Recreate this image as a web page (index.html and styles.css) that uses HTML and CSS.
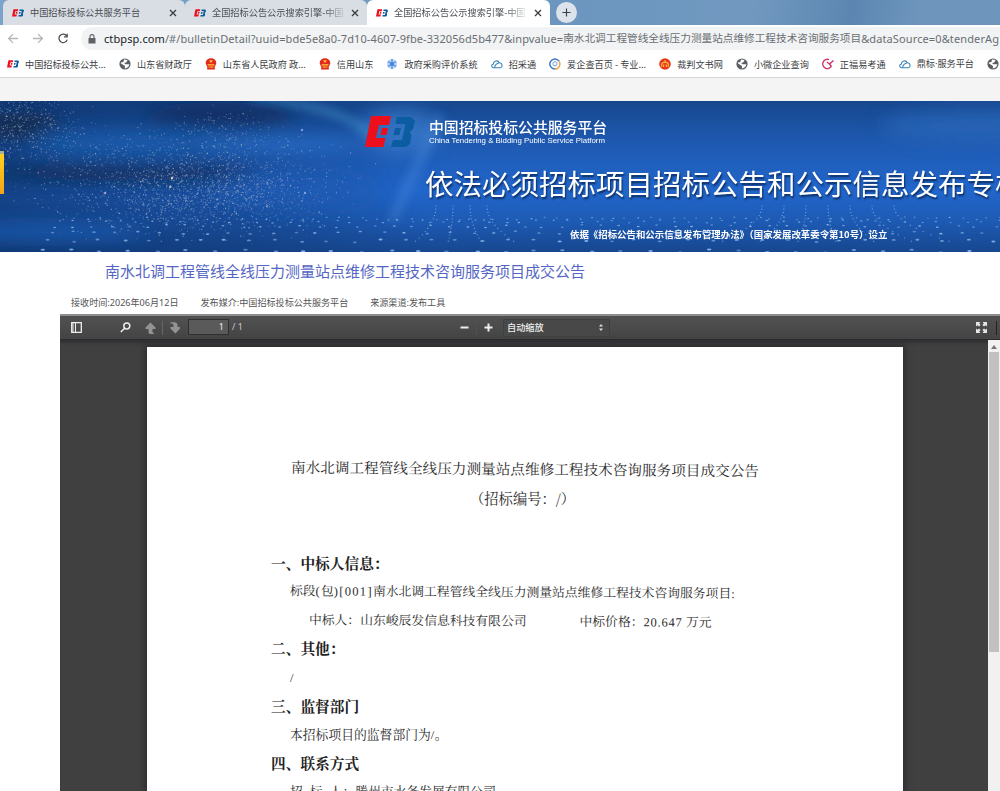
FILE: index.html
```
<!DOCTYPE html>
<html lang="zh-CN">
<head>
    <meta charset="UTF-8">
    <title>全国招标公告公示搜索引擎</title>
    <link rel="stylesheet" href="styles.css">
</head>
<body>
    <!-- shared icons -->
    <svg class="defs" width="0" height="0">
        <symbol id="eb" viewBox="0 0 50 32">
            <path fill="#ee0f1c" d="M6 0H26L24 9H14L11 22H20.500L18.500 31H0Z"/>
            <path fill="#ee0f1c" d="M17 12H23L21.500 19H15.500Z"/>
            <path fill="#0b5ca0" d="M32 1H46L50 5L48 13L44.500 16L46.500 19L45 28L41 31H26L28 24H37L40.500 8H30.500Z"/>
            <path fill="#0b5ca0" d="M30 12H36L34.500 19H28.500Z"/>
        </symbol>
        <symbol id="globe" viewBox="0 0 12 12">
            <circle cx="6" cy="6" r="5.6" fill="#5a5f64"/>
            <path fill="#fff" d="M5 1.6L8.6 2L7.2 4.6L5 5L6.6 6.2L10.4 6.3L9.4 8.8L7.6 10L5.8 10.4L6 8L2 5.4L1.8 4.4L4.4 4Z"/>
        </symbol>
        <symbol id="emblem" viewBox="0 0 12 12">
            <path fill="#e0281c" d="M6 0.3C9.4 0.3 11.4 2.6 11.3 5.6L9.6 9.2L10 11.6H2L2.4 9.2L0.7 5.6C0.6 2.6 2.6 0.3 6 0.3Z"/>
            <path fill="#ffc83d" d="M6 1.4L6.6 2.6H8L7 3.5L7.4 4.8L6 4L4.6 4.8L5 3.5L4 2.6H5.4ZM2.6 6.2H9.4V7.4H2.6ZM3.6 8.6H8.4V9.6H3.6Z"/>
        </symbol>
        <symbol id="cloud" viewBox="0 0 12 12">
            <path fill="none" stroke="#3c86b8" stroke-width="1.1" d="M2.8 9.8C0 9.6 0 6.4 2.4 6C2.6 2.6 7 1.8 8.2 4.8C11 4.6 12.4 8.8 9.4 9.8ZM3.6 9.4C4 7.4 6 5.4 8.2 4.8"/>
        </symbol>
    </svg>

    <div class="tabs">
        <div class="tab">
            <svg class="eb"><use href="#eb"/></svg>
            <span class="tab-title">中国招标投标公共服务平台</span>
            <svg class="close" viewBox="0 0 8 8"><path d="M1 1L7 7M7 1L1 7"/></svg>
        </div>
        <div class="tab">
            <svg class="eb"><use href="#eb"/></svg>
            <span class="tab-title fade">全国招标公告公示搜索引擎-中国</span>
            <svg class="close" viewBox="0 0 8 8"><path d="M1 1L7 7M7 1L1 7"/></svg>
        </div>
        <div class="tab active">
            <svg class="eb"><use href="#eb"/></svg>
            <span class="tab-title fade">全国招标公告公示搜索引擎-中国</span>
            <svg class="close" viewBox="0 0 8 8"><path d="M1 1L7 7M7 1L1 7"/></svg>
        </div>
        <div class="new-tab"><svg viewBox="0 0 10 10"><path d="M5 0.5V9.5M0.5 5H9.5"/></svg></div>
    </div>

    <div class="address-bar">
        <svg class="nav off" viewBox="0 0 12 12"><path d="M11.5 6H1.2M6 1.2L1.2 6L6 10.8"/></svg>
        <svg class="nav off" viewBox="0 0 12 12"><path d="M0.5 6H10.8M6 1.2L10.8 6L6 10.8"/></svg>
        <svg class="nav" viewBox="0 0 12 12"><path d="M10 3.2A4.6 4.6 0 1 0 10.6 7.2M10.6 0.8V4.2H7"/></svg>
        <div class="url">
            <svg class="lock" viewBox="0 0 8 10"><path fill="#5f6368" d="M0.5 4H7.5V9.5H0.5Z"/><path fill="none" stroke="#5f6368" stroke-width="1.1" d="M2 4V2.6A2 2 0 0 1 6 2.6V4"/></svg>
            <span class="latin"><b>ctbpsp.com</b>/#/bulletinDetail?uuid=bde5e8a0-7d10-4607-9fbe-332056d5b477&amp;inpvalue=</span><span class="cjk">南水北调工程管线全线压力测量站点维修工程技术咨询服务项目</span><span class="query">&amp;dataSource=0&amp;tenderAg</span>
        </div>
    </div>

    <div class="bookmarks">
        <div class="bookmark"><svg class="eb"><use href="#eb"/></svg><span>中国招标投标公共...</span></div>
        <div class="bookmark"><svg><use href="#globe"/></svg><span>山东省财政厅</span></div>
        <div class="bookmark"><svg><use href="#emblem"/></svg><span>山东省人民政府 政...</span></div>
        <div class="bookmark"><svg><use href="#emblem"/></svg><span>信用山东</span></div>
        <div class="bookmark"><svg viewBox="0 0 12 12"><path fill="#a9d0f5" d="M6 0.5L10.8 3.2V8.8L6 11.5L1.2 8.8V3.2Z"/><path fill="none" stroke="#4a86dc" d="M6 1V11M2 3.5L10 8.5M10 3.5L2 8.5"/><circle cx="6" cy="6" r="2" fill="#4a7fe0"/></svg><span>政府采购评价系统</span></div>
        <div class="bookmark"><svg><use href="#cloud"/></svg><span>招采通</span></div>
        <div class="bookmark"><svg viewBox="0 0 12 12"><path fill="none" stroke="#3f78c8" stroke-width="1.5" d="M10 3.2A5 5 0 1 0 6 11"/><path fill="none" stroke="#f0a54a" stroke-width="1.5" d="M10 3.2A5 5 0 0 1 6 11"/><circle cx="6" cy="5.8" r="2.1" fill="none" stroke="#6a9ae0"/></svg><span>爱企查百页 - 专业...</span></div>
        <div class="bookmark"><svg viewBox="0 0 12 12"><circle cx="6" cy="6" r="5.8" fill="#e5391b"/><path fill="none" stroke="#ffb23e" stroke-width="1.2" d="M6 2V5M3 9C1.8 6 3 4 6 4.4C9 4 10.2 6 9 9M4.6 9V6.6M7.4 9V6.6"/></svg><span>裁判文书网</span></div>
        <div class="bookmark"><svg><use href="#globe"/></svg><span>小微企业查询</span></div>
        <div class="bookmark"><svg viewBox="0 0 12 12"><path fill="none" stroke="#d03468" stroke-width="1.4" d="M7 1.6A4.6 4.6 0 1 0 9.4 8.2M5 4L7.5 6L11.5 2.5M7.5 6L9.5 8.5"/></svg><span>正福易考通</span></div>
        <div class="bookmark"><svg><use href="#cloud"/></svg><span class="dotted">鼎标·服务平台</span></div>
        <div class="bookmark"><svg><use href="#globe"/></svg></div>
    </div>

    <div class="banner">
        <svg class="banner-bg" id="bannerBg" width="1000" height="151" viewBox="0 0 1000 151">
            <defs>
                <linearGradient id="base" x1="0" y1="0" x2="0" y2="1">
                    <stop offset="0" stop-color="#17488e"/>
                    <stop offset="0.3" stop-color="#1f5bb4"/>
                    <stop offset="0.6" stop-color="#2166cb"/>
                    <stop offset="0.8" stop-color="#1d5ab3"/>
                    <stop offset="1" stop-color="#17478f"/>
                </linearGradient>
                <linearGradient id="dark" x1="0" y1="0" x2="1" y2="0">
                    <stop offset="0" stop-color="#0d2e60" stop-opacity="0.6"/>
                    <stop offset="0.6" stop-color="#0f3570" stop-opacity="0.4"/>
                    <stop offset="1" stop-color="#0f3570" stop-opacity="0"/>
                </linearGradient>
                <filter id="soft" x="-30%" y="-80%" width="160%" height="260%"><feGaussianBlur stdDeviation="9"/></filter>
                <filter id="softer" x="-30%" y="-80%" width="160%" height="260%"><feGaussianBlur stdDeviation="5"/></filter>
            </defs>
            <rect width="1000" height="151" fill="url(#base)"/>
            <rect width="420" height="151" fill="url(#dark)"/>
            <g filter="url(#soft)">
                <ellipse cx="130" cy="42" rx="100" ry="13" fill="#1c5eb0" opacity="0.8"/>
                <ellipse cx="220" cy="14" rx="75" ry="13" fill="#0d2c5e" opacity="0.8"/>
                <ellipse cx="20" cy="25" rx="40" ry="9" fill="#16233c" opacity="0.9"/>
                <ellipse cx="120" cy="72" rx="140" ry="8" fill="#10264a" opacity="0.8"/>
                <ellipse cx="280" cy="43" rx="80" ry="7" fill="#2a78d6" opacity="0.8"/>
                <ellipse cx="300" cy="90" rx="80" ry="20" fill="#1e5ab2" opacity="0.6"/>
                <ellipse cx="40" cy="131" rx="110" ry="6" fill="#1d62bd"/>
                <ellipse cx="400" cy="30" rx="40" ry="22" fill="#3f86d4" opacity="0.6"/>
                <ellipse cx="980" cy="25" rx="100" ry="16" fill="#2d6cc0" opacity="0.6"/>
            </g>
            <g filter="url(#softer)" fill="none">
                <path d="M250 -4C300 2 345 10 372 34" stroke="#4aa3d8" stroke-width="6" opacity="0.55"/>
                <path d="M440 15L392 120" stroke="#5fa0ea" stroke-width="9" opacity="0.3"/>
            </g>
        </svg>
        <div class="side-tag"></div>
        <div class="banner-text">
            <div class="brand">
                <svg class="brand-logo"><use href="#eb"/></svg>
                <div>
                    <div class="brand-cn">中国招标投标公共服务平台</div>
                    <div class="brand-en">China Tendering &amp; Bidding Public Service Platform</div>
                </div>
            </div>
            <div class="slogan">依法必须招标项目招标公告和公示信息发布专栏</div>
            <div class="basis">依据《招标公告和公示信息发布管理办法》（国家发展改革委令第10号）设立</div>
        </div>
    </div>

    <div class="content">
        <h1>南水北调工程管线全线压力测量站点维修工程技术咨询服务项目成交公告</h1>
        <div class="meta">
            <span>接收时间:2026年06月12日</span>
            <span>发布媒介:中国招标投标公共服务平台</span>
            <span>来源渠道:发布工具</span>
        </div>

        <div class="viewer">
            <div class="toolbar">
                <svg class="sidebar-icon" viewBox="0 0 11 11"><path fill="none" stroke="#eee" stroke-width="1.3" d="M0.7 0.7H10.3V10.3H0.7Z"/><path fill="#eee" d="M1.500 1H2.500V10H1.500ZM4 1H5V10H4Z"/></svg>
                <svg class="find-icon" viewBox="0 0 11 11"><path fill="none" stroke="#eee" stroke-width="1.5" d="M6.8 1A3 3 0 1 1 6.8 7A3 3 0 1 1 6.8 1M4.6 6.2L0.8 10"/></svg>
                <svg class="arrow" viewBox="0 0 11 12"><path fill="#939393" d="M5.5 0.5L10.5 5.5V7H7.5V9.5C7.5 10.5 8 11 9 11V12H5C4 12 3.5 11 3.5 10V7H0.5V5.5Z"/></svg>
                <i class="split"></i>
                <svg class="arrow" viewBox="0 0 11 12"><path fill="#939393" d="M6.5 11.5L1.5 6.5V5H4.5V3.5C4.5 2 3.5 1.5 1.5 1.5V0.3H5C7.5 0.3 8.5 1.5 8.5 3V5H11V6.5Z"/></svg>
                <span class="page-input">1</span>
                <span class="page-total">/ 1</span>
                <svg class="minus" viewBox="0 0 9 9"><path d="M0.5 4.5H8.5"/></svg>
                <i class="split faint"></i>
                <svg class="plus" viewBox="0 0 9 9"><path d="M0.5 4.5H8.5M4.5 0.5V8.5"/></svg>
                <span class="zoom">自动缩放<svg viewBox="0 0 4 7"><path fill="#ddd" d="M2 0L4 2.4H0ZM2 7L4 4.6H0Z"/></svg></span>
                <svg class="full" viewBox="0 0 11 11"><path fill="#e6e6e6" d="M0 0H4.4L3.2 1.4L4.6 3L3 4.6L1.4 3.2L0 4.4ZM11 0V4.4L9.6 3.2L8 4.6L6.4 3L7.8 1.4L6.6 0ZM0 11V6.6L1.4 7.8L3 6.4L4.6 8L3.2 9.6L4.4 11ZM11 11H6.6L7.8 9.6L6.4 8L8 6.4L9.6 7.8L11 6.6Z"/></svg>
                <i class="split dark"></i>
            </div>
            <div class="pages">
                <div class="page">
                    <p class="doc-title">南水北调工程管线全线压力测量站点维修工程技术咨询服务项目成交公告</p>
                    <p class="doc-code">（招标编号：/）</p>
                    <h2>一、中标人信息：</h2>
                    <p class="tilt">标段<kbd>(</kbd>包<kbd>)[001]</kbd>南水北调工程管线全线压力测量站点维修工程技术咨询服务项目<kbd>:</kbd></p>
                    <p class="winner tilt"><span>中标人：山东峻辰发信息科技有限公司</span><span>中标价格：<kbd>20.647</kbd> 万元</span></p>
                    <h2>二、其他：</h2>
                    <p><kbd>/</kbd></p>
                    <h2>三、监督部门</h2>
                    <p>本招标项目的监督部门为<kbd>/</kbd>。</p>
                    <h2>四、联系方式</h2>
                    <p class="contact"><span>招</span><span>标</span><span>人：</span>滕州市水务发展有限公司</p>
                </div>
                <div class="scrollbar">
                    <svg viewBox="0 0 6 4"><path fill="#777" d="M3 0L6 4H0Z"/></svg>
                    <div class="thumb"></div>
                </div>
            </div>
        </div>
    </div>

    <script>
        // star dust on the left of the banner and rows of light dots along its floor
        const bg = document.getElementById('bannerBg');
        let seed = 7;

        function rand() {
            seed = (seed * 16807) % 2147483647;
            return seed / 2147483647;
        }

        function dot(x, y, rx, ry, color, opacity) {
            const el = document.createElementNS('http://www.w3.org/2000/svg', 'ellipse');
            el.setAttribute('cx', x);
            el.setAttribute('cy', y);
            el.setAttribute('rx', rx);
            el.setAttribute('ry', ry);
            el.setAttribute('fill', color);
            el.setAttribute('opacity', opacity);
            bg.appendChild(el);
        }

        function cloud(count, cx, cy, w, h) {
            const colors = ['#b9c8e6', '#8ea6cf', '#d6c9bd', '#7f9fe0'];
            for (let i = 0; i < count; i++) {
                const x = cx + (rand() + rand() + rand() - 1.5) * w;
                const y = cy + (rand() + rand() + rand() - 1.5) * h;
                const r = 0.3 + rand() * 0.45;
                dot(x, y, r, r, colors[Math.floor(rand() * 4)], 0.25 + rand() * 0.45);
            }
        }

        cloud(800, 10, 25, 70, 32);
        cloud(1700, 180, 72, 140, 42);
        cloud(1300, 210, 98, 115, 34);
        cloud(160, 225, 28, 50, 20);

        // a few brighter stars
        dot(172, 77, 1.1, 1.3, '#ffd9b0', 0.9);
        dot(170, 86, 1.1, 1.1, '#f3d3e0', 0.8);
        dot(105, 92, 1.4, 1.2, '#d9b6d8', 0.7);
        dot(305, 92, 1.2, 1, '#c9d3f5', 0.7);
        dot(302, 29, 1.2, 1, '#c9d3f5', 0.7);

        for (let row = 0; row < 6; row++) {
            const y = 116 + row * row * 0.9 + row * 2;
            const step = 12 + row * 3.4;
            for (let x = 60 - row * 4; x < 1000; x += step) {
                dot(x + rand() * 5, y + rand() * 3, 1 + row * 0.25, 0.6 + row * 0.08, '#a5c8f5', 0.4 + rand() * 0.4);
            }
        }

        // curved trails running up to the horizon
        for (let i = 0; i < 11; i++) {
            const x = i < 4 ? 436 + i * 17 : 762 + (i - 4) * 22;
            for (let k = 0; k < 12; k++) {
                dot(x + (i < 4 ? i - 1.3 : i - 6.5) * k * k * 0.13, 105 + k * 3.2, 0.7, 0.6, '#b4d2fa', 0.55);
            }
        }
    </script>
</body>
</html>
```

FILE: styles.css
```
* {
    box-sizing: border-box;
}
body {
    margin: 0;
    width: 1000px;
    height: 791px;
    overflow: hidden;
    background-color: #fff;
    font-family: "Noto Sans", "Noto Sans CJK SC", sans-serif;
    color: #444;
}
h1, h2, p {
    margin: 0;
    font-weight: normal;
}
svg {
    display: block;
    flex: none;
}
.defs {
    position: absolute;
}
.eb {
    width: 12px;
    height: 8px;
}

/* browser tabs */
.tabs {
    display: flex;
    height: 25px;
    padding-left: 3px;
    background: linear-gradient(100deg, #7ba3c9 0%, #6c96bf 56%, #7199c0 75%, #5c86b1 85%, #6e96bd 92%);
}
.tab {
    display: flex;
    align-items: center;
    width: 182px;
    padding: 0 8px 0 9px;
    border-radius: 6px 6px 0 0;
    background-color: #d9dee5;
    font-family: "Noto Sans CJK SC", sans-serif;
    font-size: 9.2px;
    line-height: 13px;
    color: #4a4d52;
}
.tab.active {
    width: 183px;
    background-color: #fff;
}
.tab-title {
    width: 132px;
    margin: 0 auto 1px 6px;
    white-space: nowrap;
    overflow: hidden;
}
.fade {
    -webkit-mask-image: linear-gradient(to right, #000 85%, transparent 102%);
    mask-image: linear-gradient(to right, #000 85%, transparent 102%);
}
.close {
    width: 8px;
    height: 8px;
    fill: none;
    stroke: #3c4043;
    stroke-width: 1.4;
}
.new-tab {
    display: flex;
    align-items: center;
    justify-content: center;
    width: 21px;
    height: 21px;
    margin: 2px 0 0 6px;
    border-radius: 50%;
    background-color: #dde3ea;
}
.new-tab svg {
    width: 9px;
    height: 9px;
    stroke: #3c4043;
    stroke-width: 1.3;
}

/* address bar */
.address-bar {
    display: flex;
    align-items: center;
    gap: 13px;
    height: 27px;
    padding-left: 7px;
}
.nav {
    width: 12px;
    height: 11px;
    fill: none;
    stroke: #4a4e52;
    stroke-width: 1.4;
}
.nav.off {
    stroke: #b4b7ba;
}
.url {
    display: flex;
    align-items: center;
    flex: 1;
    height: 23px;
    margin-left: -1px;
    padding-left: 7px;
    border-radius: 12px 0 0 12px;
    background-color: #f1f3f4;
    font-size: 11px;
    line-height: 23px;
    color: #6a6e73;
    white-space: nowrap;
    overflow: hidden;
}
.url b {
    font-weight: normal;
    color: #202124;
}
.lock {
    width: 8px;
    height: 10px;
    margin-right: 8px;
}
.latin {
    letter-spacing: 0.088px;
}
.cjk {
    font-size: 10.65px;
}
.query {
    letter-spacing: 0.12px;
}

/* bookmarks */
.bookmarks {
    display: flex;
    gap: 13px;
    height: 26px;
    padding: 0 0 2px 7px;
    border-bottom: 1px solid #d5d7d9;
    overflow: hidden;
}
.bookmark {
    display: flex;
    align-items: center;
    flex: none;
    gap: 6px;
    font-family: "Noto Sans CJK SC", sans-serif;
    font-size: 9.16px;
    line-height: 14px;
    color: #3c4043;
    white-space: nowrap;
}
.bookmark svg:not(.eb) {
    width: 12px;
    height: 12px;
}
.dotted {
    font-family: "Noto Sans", "Noto Sans CJK SC", sans-serif;
}

/* banner */
.banner {
    position: relative;
    height: 151px;
    margin-top: 23px;
    box-shadow: 0 -23px 0 #f5f4f5;
}
.banner-bg {
    position: absolute;
    top: 0;
    left: 0;
}
.side-tag {
    position: absolute;
    top: 50px;
    left: 0;
    width: 4px;
    height: 43px;
    border-top: 3px solid #a9b0a0;
    background: linear-gradient(#ffd21c, #f5a318);
}
.banner-text {
    position: relative;
    padding: 15px 0 0 365px;
    color: #fff;
    font-family: "Noto Sans CJK SC", sans-serif;
    white-space: nowrap;
    overflow: hidden;
}
.brand {
    display: flex;
    height: 32px;
    gap: 14px;
}
.brand-logo {
    width: 50px;
    height: 32px;
}
.brand-cn {
    height: 19px;
    font-size: 14.85px;
    font-weight: 500;
    line-height: 21px;
}
.brand-en {
    font-family: "Liberation Sans", sans-serif;
    font-size: 7.85px;
    line-height: 11px;
}
.slogan {
    margin: 15px 0 0 60px;
    font-size: 28.5px;
    font-weight: 400;
    line-height: 40px;
    text-shadow: 1px 2px 2px #0b2c60;
}
.basis {
    margin: 23px 0 0 205px;
    font-size: 9.44px;
    font-weight: bold;
    line-height: 16px;
}

/* bulletin */
.content {
    padding-left: 60px;
}
.content h1 {
    padding-left: 45px;
    font-family: "Noto Sans CJK SC", sans-serif;
    font-size: 15px;
    line-height: 37px;
    height: 38px;
    color: #5466c4;
}
.meta {
    display: flex;
    gap: 22px;
    height: 24px;
    padding-left: 11px;
    font-size: 9.08px;
    line-height: 25px;
    color: #555;
}

/* pdf viewer */
.viewer {
    height: 477px;
    border-top: 2px solid #8e8e8e;
    background-color: #404040;
    overflow: hidden;
}
.toolbar {
    display: flex;
    align-items: center;
    height: 24px;
    padding-left: 11px;
    background: linear-gradient(#515151, #444);
    border-bottom: 1px solid #2c2c2c;
    color: #eee;
}
.sidebar-icon, .find-icon, .full {
    width: 11px;
    height: 11px;
}
.find-icon {
    margin: 0 14px 0 38px;
}
.arrow {
    width: 11px;
    height: 12px;
}
.split {
    width: 1px;
    height: 14px;
    margin: 0 6px;
    background-color: #666;
}
.split.faint {
    margin: 0 7px;
    background-color: #4f4f4f;
}
.split.dark {
    margin: 0 0 0 9px;
    background-color: #222;
}
.page-input {
    width: 41px;
    height: 16px;
    margin: 0 0 2px 8px;
    padding-right: 4px;
    border: 1px solid #2f2f2f;
    background-color: #5a5a5a;
    font-size: 9px;
    line-height: 14px;
    text-align: right;
}
.page-total {
    width: 20px;
    margin: 0 0 2px 3px;
    font-size: 9px;
    color: #ccc;
}
.minus, .plus {
    width: 9px;
    height: 9px;
    stroke: #eee;
    stroke-width: 2;
}
.minus {
    margin-left: 208px;
}
.zoom {
    display: flex;
    align-items: center;
    justify-content: space-between;
    width: 107px;
    height: 18px;
    margin-left: 10px;
    padding: 0 6px 2px 3px;
    border: 1px solid #404040;
    background-color: #484848;
    font-size: 9.2px;
    font-weight: 500;
}
.zoom svg {
    width: 4px;
    height: 7px;
    margin-top: 1px;
}
.full {
    margin-left: 366px;
}
.pages {
    display: flex;
    height: 451px;
    box-shadow: inset 0 5px 4px -3px #2c2c32;
}
.page {
    width: 756px;
    height: 444px;
    margin: 7px 85px 0 87px;
    padding: 108px 0 0 124px;
    background-color: #fff;
    box-shadow: 0 0 7px 2px #2b2b30;
    overflow: hidden;
    font-family: "Noto Serif CJK SC", "Noto Sans CJK SC", serif;
    font-size: 12.8px;
    line-height: 28.6px;
    color: #2c2c2c;
    white-space: nowrap;
}
.page p {
    height: 28.6px;
    padding-left: 19px;
}
.page h2 {
    height: 28.6px;
    font-size: 14.7px;
    font-weight: bold;
    line-height: 28.6px;
    color: #222;
}
.page kbd {
    font-family: "Liberation Serif", serif;
    font-size: 12.5px;
    letter-spacing: 0.5px;
}
.tilt kbd {
    letter-spacing: 1.3px;
}
.winner kbd {
    letter-spacing: 0.8px;
}
.page .doc-title {
    padding-left: 20px;
    font-size: 14.63px;
    transform: rotate(0.45deg);
}
.page .doc-code {
    height: 65px;
    padding-left: 199px;
    font-size: 14.3px;
}
.tilt {
    transform: rotate(0.35deg);
}
.page .tilt {
    padding-top: 1px;
}
.page .winner {
    display: flex;
    gap: 53px;
    padding-left: 38px;
}
.page .contact {
    display: flex;
}
.contact span {
    margin-right: 7px;
}
.contact span:nth-child(3) {
    margin-right: 0;
}
.scrollbar {
    display: flex;
    flex-direction: column;
    align-items: center;
    width: 12px;
    height: 451px;
    padding-top: 5px;
    background-color: #f1f1f1;
}
.scrollbar svg {
    width: 6px;
    height: 4px;
}
.thumb {
    width: 10px;
    height: 300px;
    margin-top: 3px;
    background-color: #c1c1c1;
}
```
